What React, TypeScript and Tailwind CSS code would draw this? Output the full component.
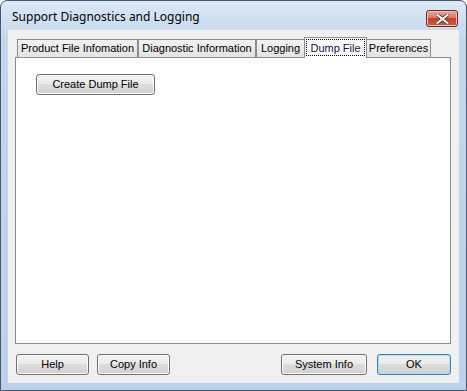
import React from "react";

const tabs = [
  { label: "Product File Infomation", w: "w-[121px]" },
  { label: "Diagnostic Information", w: "w-[118px]" },
  { label: "Logging", w: "w-[49px]" },
  { label: "Dump File", w: "w-[63px]", active: true },
  { label: "Preferences", w: "w-[65px]" },
];

function WinButton({ label, className = "", isDefault = false }: { label: string; className?: string; isDefault?: boolean }) {
  return (
    <button
      className={`h-[21px] rounded-[3px] border text-[11px] text-black ${
        isDefault ? "border-[#3c7fb1] shadow-[inset_0_0_0_1px_#aee0f8]" : "border-[#707070] shadow-[inset_0_0_0_1px_#fcfcfc]"
      } bg-[linear-gradient(#f2f2f2_0%,#ebebeb_50%,#dddddd_50%,#cfcfcf_100%)] ${className}`}
    >
      {label}
    </button>
  );
}

export default function App() {
  return (
    <div
      className="w-[467px] h-[391px] flex flex-col border border-[#4a5768] rounded-t-[7px] bg-[linear-gradient(#dce8f6,#c2d6ec_40px,#bcd2ea)] overflow-hidden"
      style={{ fontFamily: '"Liberation Sans", Arial, sans-serif' }}
    >
      {/* Title bar */}
      <div className="h-[29px] flex items-start shrink-0">
        <span
          className="pl-[11px] pt-[9px] text-[12px] leading-[14px] text-black"
          style={{ fontFamily: '"Noto Sans", "Open Sans", sans-serif' }}
        >
          Support Diagnostics and Logging
        </span>
        <div className="ml-auto mr-[8px] mt-[9px] w-[32px] h-[17px] rounded-[3px] border border-[#6a2a22] bg-[linear-gradient(#e9a899_0%,#d57a68_45%,#c2412d_50%,#cc5a3e_100%)] flex items-center justify-center shadow-[inset_0_0_0_1px_#f0c0b0]">
          <svg width="13" height="10" viewBox="0 0 13 10">
            <path d="M1.5 1 L11.5 9 M11.5 1 L1.5 9" stroke="#5a2a22" strokeWidth="3.6" strokeLinecap="square" />
            <path d="M1.5 1 L11.5 9 M11.5 1 L1.5 9" stroke="#ffffff" strokeWidth="2" strokeLinecap="square" />
          </svg>
        </div>
      </div>

      {/* Client area */}
      <div className="flex-1 mx-[7px] bg-[#f0f0f0] flex flex-col">
        <div className="pl-[9px] pt-[7px] flex items-end h-[27px] relative z-10">
          {tabs.map((t) =>
            t.active ? (
              <div
                key={t.label}
                className={`${t.w} h-[21px] -mx-[1px] -mb-[1px] bg-white border border-b-0 border-[#898c95] flex items-start justify-center pt-[1px] text-[11px] text-[#10104a]`}
              >
                <span className="border border-dotted border-black px-[3px] leading-[14px] h-[17px] flex items-center">
                  {t.label}
                </span>
              </div>
            ) : (
              <div
                key={t.label}
                className={`${t.w} h-[18px] bg-[linear-gradient(#f2f2f2,#e3e3e3)] border border-b-0 border-[#898c95] flex items-center justify-center text-[11px] text-black shrink-0`}
              >
                {t.label}
              </div>
            )
          )}
        </div>
        <div className="ml-[7px] w-[436px] h-[287px] bg-white border border-[#898c95]">
          <WinButton label="Create Dump File" className="ml-[20px] mt-[16px] w-[119px]" />
        </div>
        <div className="flex items-start mt-[10px] pl-[8px]">
          <WinButton label="Help" className="w-[73px]" />
          <WinButton label="Copy Info" className="ml-[8px] w-[73px]" />
          <WinButton label="System Info" className="ml-auto w-[86px]" />
          <WinButton label="OK" isDefault className="ml-[10px] mr-[8px] w-[74px]" />
        </div>
      </div>
      <div className="h-[7px] shrink-0" />
    </div>
  );
}
